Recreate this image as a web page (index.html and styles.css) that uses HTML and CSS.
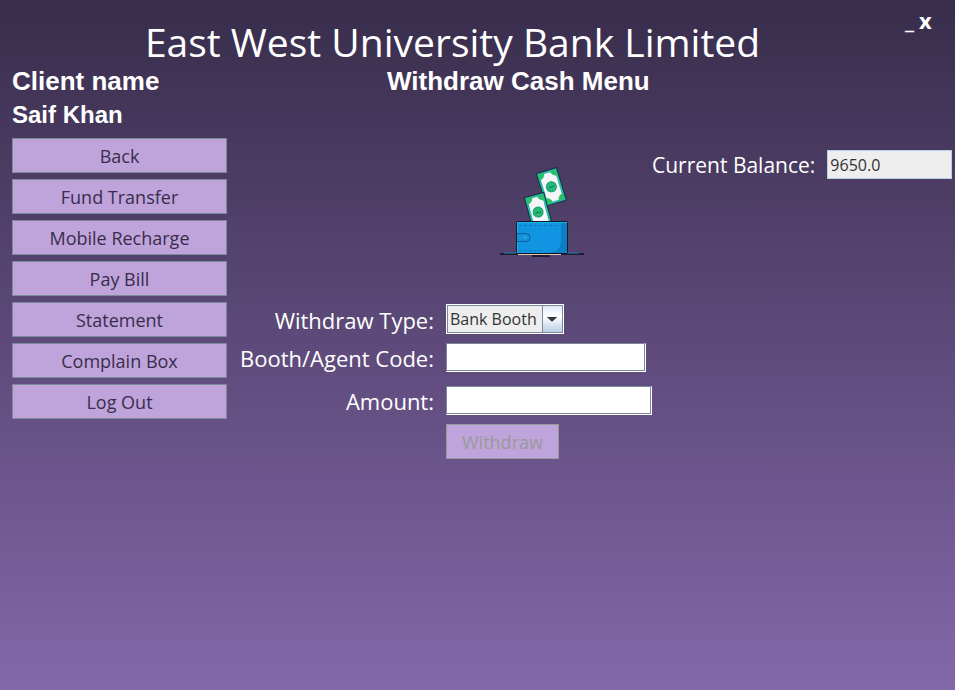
FILE: index.html
```html
<!DOCTYPE html>
<html lang="en">
<head>
<meta charset="utf-8">
<title>East West University Bank Limited</title>
<link rel="stylesheet" href="styles.css">
</head>
<body>
<header class="topbar">
  <h1 class="bank-name">East West University Bank Limited</h1>
  <div class="window-controls">
    <button type="button" class="window-button">_</button>
    <button type="button" class="window-button">x</button>
  </div>
</header>
<div class="layout">
  <aside class="sidebar">
    <p class="client-label">Client name</p>
    <p class="client-name">Saif Khan</p>
    <nav class="menu">
      <button type="button" class="button">Back</button>
      <button type="button" class="button">Fund Transfer</button>
      <button type="button" class="button">Mobile Recharge</button>
      <button type="button" class="button">Pay Bill</button>
      <button type="button" class="button">Statement</button>
      <button type="button" class="button">Complain Box</button>
      <button type="button" class="button">Log Out</button>
    </nav>
  </aside>
  <main class="content">
    <section class="withdraw">
      <h2 class="page-title">Withdraw Cash Menu</h2>
      <svg class="wallet" viewBox="0 0 84 90" aria-hidden="true">
        <g transform="translate(37 7) rotate(-17)">
          <rect width="20" height="33" fill="#fff" stroke="#16313c" stroke-width="2"/>
          <rect x="1" y="1" width="18" height="31" fill="#f5f5f8" stroke="#25b9a5" stroke-width="2"/>
          <path d="M1 1h6a6 6 0 0 1-6 6zM19 1h-6a6 6 0 0 0 6 6zM1 32h6a6 6 0 0 0-6-6zM19 32h-6a6 6 0 0 1 6-6z" fill="#2cc06c"/>
          <circle cx="10" cy="16.500" r="5" fill="#22bd70" stroke="#159a78"/>
          <path d="M7 17l2-1 2 1 2-1" fill="none" stroke="#137569"/>
        </g>
        <g transform="translate(25 31) rotate(-15)">
          <rect width="19" height="34" fill="#fff" stroke="#16313c" stroke-width="2"/>
          <rect x="1" y="1" width="17" height="32" fill="#f5f5f8" stroke="#25b9a5" stroke-width="2"/>
          <path d="M1 1h6a6 6 0 0 1-6 6zM18 1h-6a6 6 0 0 0 6 6z" fill="#2cc06c"/>
          <circle cx="9" cy="17" r="5" fill="#22bd70" stroke="#159a78"/>
          <path d="M6 18l2-1 2 1 2-1" fill="none" stroke="#137569"/>
        </g>
        <path d="M0 87h84M32 89h18" stroke="#101019" stroke-width="1.500"/>
        <path d="M4 86h75" stroke="#1783b5"/>
        <path d="M18 87.500h43" stroke="#dfc6b1"/>
        <rect x="16.500" y="54.500" width="51" height="32" rx="1" fill="#1195e2" stroke="#101827"/>
        <path d="M61 55h6v31H43c12 0 18-3 18-12z" fill="#0c7fc4"/>
        <path d="M17.500 86V55.500H67" fill="none" stroke="#1bb5e6"/>
        <path d="M19 58.500h46M19 83.500h24" stroke="#1279c0" stroke-dasharray="3 2" fill="none"/>
        <path d="M17 66.500h9a4 4 0 0 1 0 8h-9" fill="#1492dc" stroke="#0b5f9e"/>
        <circle cx="25" cy="70.500" r="1" fill="#35bde9"/>
      </svg>
      <form class="form">
        <label for="type">Withdraw Type:</label>
        <span class="select-box">
          <select id="type"><option>Bank Booth</option><option>Agent</option></select>
          <svg class="arrow" viewBox="0 0 20 26" aria-hidden="true"><path d="M4 11h11l-5.500 5z" fill="#333"/></svg>
        </span>
        <label for="code">Booth/Agent Code:</label>
        <input id="code" class="field field-code" type="text">
        <label for="amount">Amount:</label>
        <input id="amount" class="field field-amount" type="text">
        <button type="submit" class="button submit" disabled>Withdraw</button>
      </form>
    </section>
    <div class="balance">
      <label for="balance">Current Balance:</label>
      <input id="balance" class="balance-value" type="text" size="8" value="9650.0" readonly>
    </div>
  </main>
</div>
</body>
</html>
```

FILE: styles.css
```css
* {
  box-sizing: border-box;
}

body {
  margin: 0;
  min-height: 100vh;
  background: linear-gradient(#382d4b, #8368aa);
  color: #fff;
  font: 21px/28px "Open Sans", "Noto Sans", sans-serif;
}

h1,
h2,
p {
  margin: 0;
}

button,
input,
select {
  margin: 0;
  font: inherit;
}

.topbar {
  display: flex;
}

.bank-name {
  flex: 1;
  padding-top: 16px;
  text-align: center;
  font-size: 39px;
  line-height: 52px;
  font-weight: 400;
}

.window-controls {
  display: flex;
  align-items: flex-start;
  gap: 5px;
  width: 50px;
  padding-top: 6px;
}

.window-button {
  padding: 0;
  border: 0;
  background: none;
  color: #fff;
  font-size: 22px;
  font-weight: 700;
}

.layout {
  display: grid;
  grid-template-columns: 215px 1fr;
  gap: 12px;
  padding: 0 3px 0 12px;
}

.client-label,
.client-name,
.page-title {
  font-family: "Liberation Sans", sans-serif;
  font-size: 26px;
  line-height: 26px;
  font-weight: 700;
}

.client-name {
  margin-top: 8px;
  font-size: 24px;
}

.menu {
  display: grid;
  gap: 6px;
  margin-top: 10px;
}

.button {
  height: 35px;
  padding: 0 15px;
  border: 1px solid #7a8a99;
  background: #bfa4db;
  color: #382d4b;
  font-size: 18px;
  font-weight: 500;
}

.content {
  display: grid;
  grid-template-columns: 413px 1fr;
  align-items: start;
}

.page-title {
  padding-left: 148px;
  white-space: nowrap;
}

.wallet {
  display: block;
  width: 84px;
  height: 90px;
  margin: 73px 0 0 261px;
}

.form {
  display: grid;
  grid-template-columns: 195px auto;
  justify-content: start;
  align-items: end;
  gap: 9px 12px;
  margin-top: 47px;
}

.form label {
  font-size: 22px;
  text-align: right;
  white-space: nowrap;
}

.select-box {
  display: grid;
  grid-template: 28px / 1fr 21px;
  width: 118px;
  border: 1px solid #fff;
}

.select-box select {
  grid-area: 1 / 1 / 2 / 3;
  appearance: none;
  width: 100%;
  height: 28px;
  padding: 0 2px;
  border: 1px solid #7a8a99;
  border-radius: 0;
  background: #eee;
  color: #333;
  font-size: 16px;
  line-height: 26px;
}

.arrow {
  grid-area: 1 / 2;
  align-self: center;
  width: 20px;
  height: 26px;
  border-left: 1px solid #7a8a99;
  background: linear-gradient(#dfeaf4, #fff 40%, #b8cfe5);
  pointer-events: none;
}

.field {
  height: 29px;
  padding: 0 3px;
  border: 1px solid #7a8a99;
  border-right-color: #fff;
  border-bottom-color: #fff;
  box-shadow: inset -1px -1px #7a8a99;
  background: #fff;
  color: #333;
}

.field-code {
  width: 200px;
}

.field-amount {
  width: 206px;
  margin-top: 5px;
}

.submit {
  grid-column: 2;
  justify-self: start;
}

.submit:disabled {
  border-color: #999;
  color: #999;
}

.balance {
  display: flex;
  align-items: center;
  gap: 12px;
  margin-top: 82px;
  white-space: nowrap;
}

.balance-value {
  flex: 1;
  min-width: 0;
  height: 29px;
  padding: 0 2px;
  border: 1px solid #b8cfe5;
  background: #eee;
  color: #333;
  font-size: 16px;
}
```
